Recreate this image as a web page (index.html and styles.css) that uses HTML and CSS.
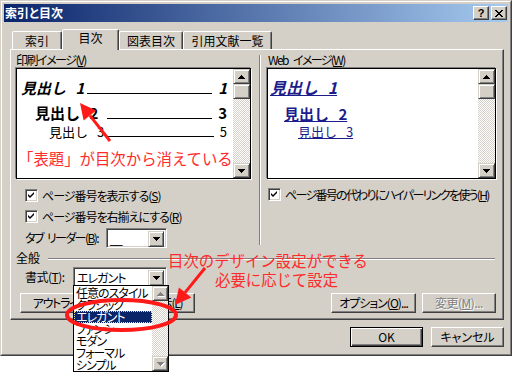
FILE: index.html
```html
<!DOCTYPE html>
<html lang="ja">
<head>
<meta charset="utf-8">
<title>索引と目次</title>
<link rel="stylesheet" href="styles.css">
</head>
<body>
<svg class="defs" width="0" height="0" aria-hidden="true">
  <defs>
    <path id="tri-dn" d="M0 0h7v1h-1v1h-1v1h-1v1h-1v-1h-1v-1h-1v-1h-1z"/>
    <path id="tri-up" d="M3 0h1v1h1v1h1v1h1v1h-7v-1h1v-1h1v-1h1z"/>
    <path id="chk" d="M3 5l2 2l4-4v2l-4 4l-2-2z"/>
  </defs>
</svg>
<div class="page">
  <div class="window">
    <div class="frame">
      <div class="titlebar">
        <span class="title">索引と目次</span>
        <div class="tbtns">
          <span class="tbtn help">?</span>
          <span class="tbtn"><svg width="8" height="7" viewBox="0 0 8 7"><path d="M0 0h2v1h-2zM6 0h2v1h-2zM1 1h2v1h-2zM5 1h2v1h-2zM2 2h4v1h-4zM3 3h2v1h-2zM2 4h4v1h-4zM1 5h2v1h-2zM5 5h2v1h-2zM0 6h2v1h-2zM6 6h2v1h-2z"/></svg></span>
        </div>
      </div>
      <div class="main">
        <div class="tabs">
          <div class="tab t1">索引</div>
          <div class="tab t2 sel">目次</div>
          <div class="tab t3">図表目次</div>
          <div class="tab t4">引用文献一覧</div>
        </div>
        <div class="panel">
          <div class="top">
            <div class="col-l">
              <div class="label lbl-print">印刷イメージ(<u>V</u>)</div>
              <div class="preview">
                <div class="pv-content">
                  <div class="prow r1"><span class="ph">見出し 1</span><span class="lead"></span><span class="pn">1</span></div>
                  <div class="prow r2"><span class="ph">見出し 2</span><span class="lead"></span><span class="pn">3</span></div>
                  <div class="prow r3"><span class="ph">見出し 3</span><span class="lead"></span><span class="pn">5</span></div>
                </div>
                <div class="vscroll">
                  <div class="sbtn"><svg width="7" height="4" viewBox="0 0 7 4"><use href="#tri-up"/></svg></div>
                  <div class="thumb"></div>
                  <div class="track"></div>
                  <div class="sbtn"><svg width="7" height="4" viewBox="0 0 7 4"><use href="#tri-dn"/></svg></div>
                </div>
              </div>
              <div class="chk c1"><span class="cb"><svg width="11" height="11" viewBox="1 1 11 11"><use href="#chk"/></svg></span><span>ページ番号を表示する(<u>S</u>)</span></div>
              <div class="chk c2"><span class="cb"><svg width="11" height="11" viewBox="1 1 11 11"><use href="#chk"/></svg></span><span>ページ番号を右揃えにする(<u>R</u>)</span></div>
              <div class="field-row leader-row">
                <span class="flabel leader-label">タブ リーダー(<u>B</u>):</span>
                <div class="combo leader-combo"><span class="val leader-val">__</span><span class="dd"><svg width="7" height="4" viewBox="0 0 7 4"><use href="#tri-dn"/></svg></span></div>
              </div>
            </div>
            <div class="sep"></div>
            <div class="col-r">
              <div class="label lbl-web">Web イメージ(<u>W</u>)</div>
              <div class="preview">
                <div class="pv-content web">
                  <div class="wrow w1"><span class="link">見出し 1</span></div>
                  <div class="wrow w2"><span class="link">見出し 2</span></div>
                  <div class="wrow w3"><span class="link">見出し 3</span></div>
                </div>
                <div class="vscroll">
                  <div class="sbtn"><svg width="7" height="4" viewBox="0 0 7 4"><use href="#tri-up"/></svg></div>
                  <div class="thumb"></div>
                  <div class="track"></div>
                  <div class="sbtn"><svg width="7" height="4" viewBox="0 0 7 4"><use href="#tri-dn"/></svg></div>
                </div>
              </div>
              <div class="chk c3"><span class="cb"><svg width="11" height="11" viewBox="1 1 11 11"><use href="#chk"/></svg></span><span>ページ番号の代わりにハイパーリンクを使う(<u>H</u>)</span></div>
            </div>
          </div>
          <div class="gen-head"><span>全般</span><span class="gen-line"></span></div>
          <div class="field-row fmt-row">
            <span class="flabel fmt-label">書式(<u>T</u>):</span>
            <div class="combo fmt-combo"><span class="val">エレガント</span><span class="dd"><svg width="7" height="4" viewBox="0 0 7 4"><use href="#tri-dn"/></svg></span></div>
          </div>
          <div class="btn-row">
            <div class="btn outline-btn">アウトライン ツールバーの表示(<u>L</u>)</div>
            <div class="btn opt-btn">オプション(<u>O</u>)...</div>
            <div class="btn dis mod-btn">変更(<u>M</u>)...</div>
          </div>
        </div>
        <div class="footer">
          <div class="btn def foot-btn">OK</div>
          <div class="btn foot-btn">キャンセル</div>
        </div>
      </div>
    </div>
  </div>

  <div class="dropdown">
    <div class="dd-list">
      <div class="dd-item">任意のスタイル</div>
      <div class="dd-item">クラシック</div>
      <div class="dd-item sel">エレガント</div>
      <div class="dd-item">ファンシー</div>
      <div class="dd-item">モダン</div>
      <div class="dd-item">フォーマル</div>
      <div class="dd-item">シンプル</div>
    </div>
    <div class="dd-scroll">
      <div class="sbtn dis-arrow"><svg width="7" height="4" viewBox="0 0 7 4"><use href="#tri-up"/></svg></div>
      <div class="track"></div>
      <div class="sbtn dis-arrow"><svg width="7" height="4" viewBox="0 0 7 4"><use href="#tri-dn"/></svg></div>
    </div>
  </div>

  <div class="note n1">「表題」が目次から消えている</div>
  <div class="note n2">目次のデザイン設定ができる</div>
  <div class="note n3">必要に応じて設定</div>

  <svg class="marks" width="515" height="376" viewBox="0 0 515 376">
    <line x1="110" y1="141" x2="90" y2="115.6" stroke="#ff1a1a" stroke-width="3"/>
    <polygon points="80,103 96.2,110.6 83.6,120.6" fill="#ff1a1a"/>
    <line x1="205" y1="268" x2="185" y2="292.6" stroke="#ff1a1a" stroke-width="3"/>
    <polygon points="175,305 191.3,297.6 178.9,287.6" fill="#ff1a1a"/>
    <ellipse cx="121.5" cy="315" rx="54.5" ry="15" fill="none" stroke="#ff1a1a" stroke-width="4"/>
  </svg>
</div>
</body>
</html>
```
FILE: styles.css
```css
* { box-sizing: border-box; margin: 0; padding: 0; }
body {
  background: #fff;
  font-family: "Noto Sans CJK JP", "Noto Sans CJK SC", sans-serif;
  font-size: 12px;
  line-height: 14px;
  color: #000;
  font-feature-settings: "palt" 1;
}
.defs { position: absolute; width: 0; height: 0; }
.page { position: relative; width: 515px; height: 376px; overflow: hidden; }

.window {
  width: 512px; height: 356px;
  background: #d4d0c8;
  border: 1px solid;
  border-color: #d4d0c8 #404040 #404040 #d4d0c8;
}
.frame {
  height: 100%;
  border: 1px solid;
  border-color: #fff #808080 #808080 #fff;
  padding: 2px;
  display: flex;
  flex-direction: column;
}
.titlebar {
  height: 18px;
  display: flex;
  align-items: center;
  padding-left: 1px;
  background: linear-gradient(to right, #0a246a, #a6caf0);
}
.title { color: #fff; font-weight: bold; line-height: 14px; }
.tbtns { margin-left: auto; margin-right: 1px; display: flex; gap: 2px; }
.tbtn {
  width: 16px; height: 14px;
  display: flex; align-items: center; justify-content: center;
  background: #d4d0c8;
  border: 1px solid;
  border-color: #fff #404040 #404040 #fff;
  box-shadow: inset -1px -1px #808080;
}
.tbtn.help { font: bold 11px/12px "Liberation Sans", sans-serif; }

.main { flex: 1; display: flex; flex-direction: column; padding: 7px 4px 0 6px; }
.tabs { display: flex; align-items: flex-end; height: 20px; padding-left: 2px; }
.tab {
  height: 18px;
  padding-top: 1px;
  text-align: center;
  line-height: 16px;
  white-space: nowrap;
  background: #d4d0c8;
  border: 1px solid;
  border-bottom: none;
  border-color: #fff #404040 transparent #fff;
  box-shadow: inset -1px 0 #808080;
  border-radius: 2px 2px 0 0;
}
.tab.sel { height: 21px; padding-top: 0; margin-bottom: -1px; position: relative; z-index: 1; }
.t1 { width: 50px; }
.t2 { width: 57px; }
.t3 { width: 64px; }
.t4 { width: 89px; }

.panel {
  height: 271px;
  border: 1px solid;
  border-color: #fff #404040 #404040 #fff;
  box-shadow: inset -1px -1px #808080;
  padding: 3px 7px 0 5px;
  display: flex;
  flex-direction: column;
}
.top { display: flex; }
.col-l { width: 235px; }
.col-r { width: 229px; }
.sep {
  width: 2px;
  margin: 2px 6px 3px 8px;
  border-left: 1px solid #808080;
  border-right: 1px solid #fff;
}
.label { height: 14px; line-height: 14px; margin-bottom: 1px; white-space: nowrap; }
.lbl-print { letter-spacing: -1.5px; }
.lbl-web { letter-spacing: -1.6px; word-spacing: 4px; padding-left: 1px; }

.preview {
  height: 111px;
  display: flex;
  background: #fff;
  border: 1px solid #000;
  box-shadow: -1px -1px 0 #808080, 1px 1px 0 #fff;
}
.pv-content { flex: 1; overflow: hidden; font-feature-settings: normal; }
.vscroll, .dd-scroll {
  background-color: #fff;
  background-image: conic-gradient(#d4d0c8 25%, #fff 0 50%, #d4d0c8 0 75%, #fff 0);
  background-size: 2px 2px;
}
.vscroll { width: 17px; display: flex; flex-direction: column; }
.sbtn, .thumb, .dd {
  background: #d4d0c8;
  border: 1px solid;
  border-color: #d4d0c8 #404040 #404040 #d4d0c8;
  box-shadow: inset 1px 1px #fff, inset -1px -1px #808080;
  display: flex; align-items: center; justify-content: center;
}
.sbtn { height: 15px; flex-shrink: 0; }
.thumb { height: 15px; flex-shrink: 0; }
.track { flex: 1; }
.sbtn svg, .dd svg { fill: #000; }
.dis-arrow svg { fill: #808080; filter: drop-shadow(1px 1px 0 #fff); }

.prow { display: flex; align-items: baseline; white-space: nowrap; padding-right: 6px; }
.ph { flex-shrink: 0; word-spacing: 6px; }
.lead { flex: 1; border-bottom: 1px solid #000; }
.pn { margin-left: 6px; }
.r1 { margin-top: 10px; height: 18px; line-height: 18px; font-size: 15px; font-weight: bold; font-style: italic; padding-left: 4px; }
.r1 .ph { width: 66px; }
.r2 { margin-top: 8px; height: 16px; line-height: 16px; font-size: 15px; font-weight: bold; padding-left: 18px; }
.r2 .ph { width: 72px; }
.r3 { margin-top: 4px; height: 14px; line-height: 14px; font-size: 13px; padding-left: 32px; }
.r3 .ph { width: 57px; }

.wrow { white-space: nowrap; }
.link { color: #1c1c8c; text-decoration: underline; word-spacing: 6px; }
.w1 { margin-top: 9px; height: 18px; line-height: 18px; font-size: 16px; font-weight: bold; font-style: italic; padding-left: 2px; }
.w2 { margin-top: 10px; height: 16px; line-height: 16px; font-size: 15px; font-weight: bold; padding-left: 16px; }
.w3 { margin-top: 3px; height: 14px; line-height: 14px; font-size: 13px; padding-left: 30px; }

.chk { display: flex; align-items: center; height: 13px; white-space: nowrap; }
.c1 { margin-top: 10px; padding-left: 9px; letter-spacing: -1px; }
.c2 { margin-top: 8px; padding-left: 9px; letter-spacing: -1px; }
.c3 { margin-top: 9px; padding-left: 1px; letter-spacing: -1.7px; }
.cb {
  width: 13px; height: 13px; flex-shrink: 0;
  margin-right: 4px;
  background: #fff;
  border: 1px solid;
  border-color: #808080 #fff #fff #808080;
  box-shadow: inset 1px 1px #404040, inset -1px -1px #d4d0c8;
  display: flex;
}
.cb svg { fill: #000; }

.field-row { display: flex; align-items: center; padding-left: 9px; white-space: nowrap; }
.leader-row { margin-top: 5px; }
.leader-label { width: 81px; letter-spacing: -1.6px; word-spacing: 3px; }
.fmt-row { margin-top: 3px; }
.fmt-label { width: 48px; letter-spacing: -0.5px; }
.combo {
  height: 20px;
  display: flex;
  background: #fff;
  border: 1px solid;
  border-color: #808080 #fff #fff #808080;
  box-shadow: inset 1px 1px #404040, inset -1px -1px #d4d0c8;
  padding: 2px;
}
.combo .val { flex: 1; line-height: 16px; padding-left: 1px; letter-spacing: -1px; }
.combo .dd { width: 16px; height: 16px; }
.leader-combo { width: 61px; }
.leader-val { font-family: "Liberation Sans", sans-serif; letter-spacing: 0; }
.fmt-combo { width: 94px; }

.gen-head { display: flex; align-items: center; height: 13px; margin-top: 3px; }
.gen-line {
  flex: 1; height: 2px; margin: 2px 1px 0 8px;
  border-top: 1px solid #808080;
  border-bottom: 1px solid #fff;
}

.btn {
  height: 20px;
  background: #d4d0c8;
  border: 1px solid;
  border-color: #fff #404040 #404040 #fff;
  box-shadow: inset -1px -1px #808080;
  display: flex; align-items: center; justify-content: center;
  white-space: nowrap; overflow: hidden;
  line-height: 14px;
}
.btn.def { border-color: #000; box-shadow: inset 1px 1px #fff, inset -1px -1px #404040, inset -2px -2px #808080; }
.btn.dis { color: #808080; text-shadow: 1px 1px #fff; }
.btn-row { display: flex; margin-top: 6px; }
.outline-btn { width: 175px; margin-left: 4px; letter-spacing: -1.3px; }
.opt-btn { width: 85px; margin-left: auto; letter-spacing: -1px; }
.mod-btn { width: 74px; margin-left: 6px; letter-spacing: -0.5px; }
.footer { display: flex; justify-content: flex-end; gap: 8px; margin-top: 7px; }
.foot-btn { width: 73px; }

.dropdown {
  position: absolute; left: 73px; top: 285px;
  width: 96px; height: 87px;
  border: 1px solid #000;
  background: #fff;
  display: flex;
  z-index: 5;
}
.dd-list { width: 78px; padding-top: 1px; }
.dd-item { height: 12px; line-height: 12px; padding-left: 2px; white-space: nowrap; overflow: hidden; letter-spacing: -1px; }
.dd-item.sel { background: #0a246a; color: #fff; outline: 1px dotted #e8e07a; outline-offset: -1px; }
.dd-scroll { width: 16px; display: flex; flex-direction: column; }

.note {
  position: absolute;
  color: #ff2b2b;
  font-size: 15px;
  line-height: 18px;
  white-space: nowrap;
  font-feature-settings: normal;
  z-index: 10;
}
.n1 { left: 18px; top: 149px; font-size: 15.4px; }
.n2 { left: 168px; top: 251px; font-size: 15.4px; }
.n3 { left: 215px; top: 270px; font-size: 15.4px; }
.marks { position: absolute; left: 0; top: 0; z-index: 11; pointer-events: none; }
```
